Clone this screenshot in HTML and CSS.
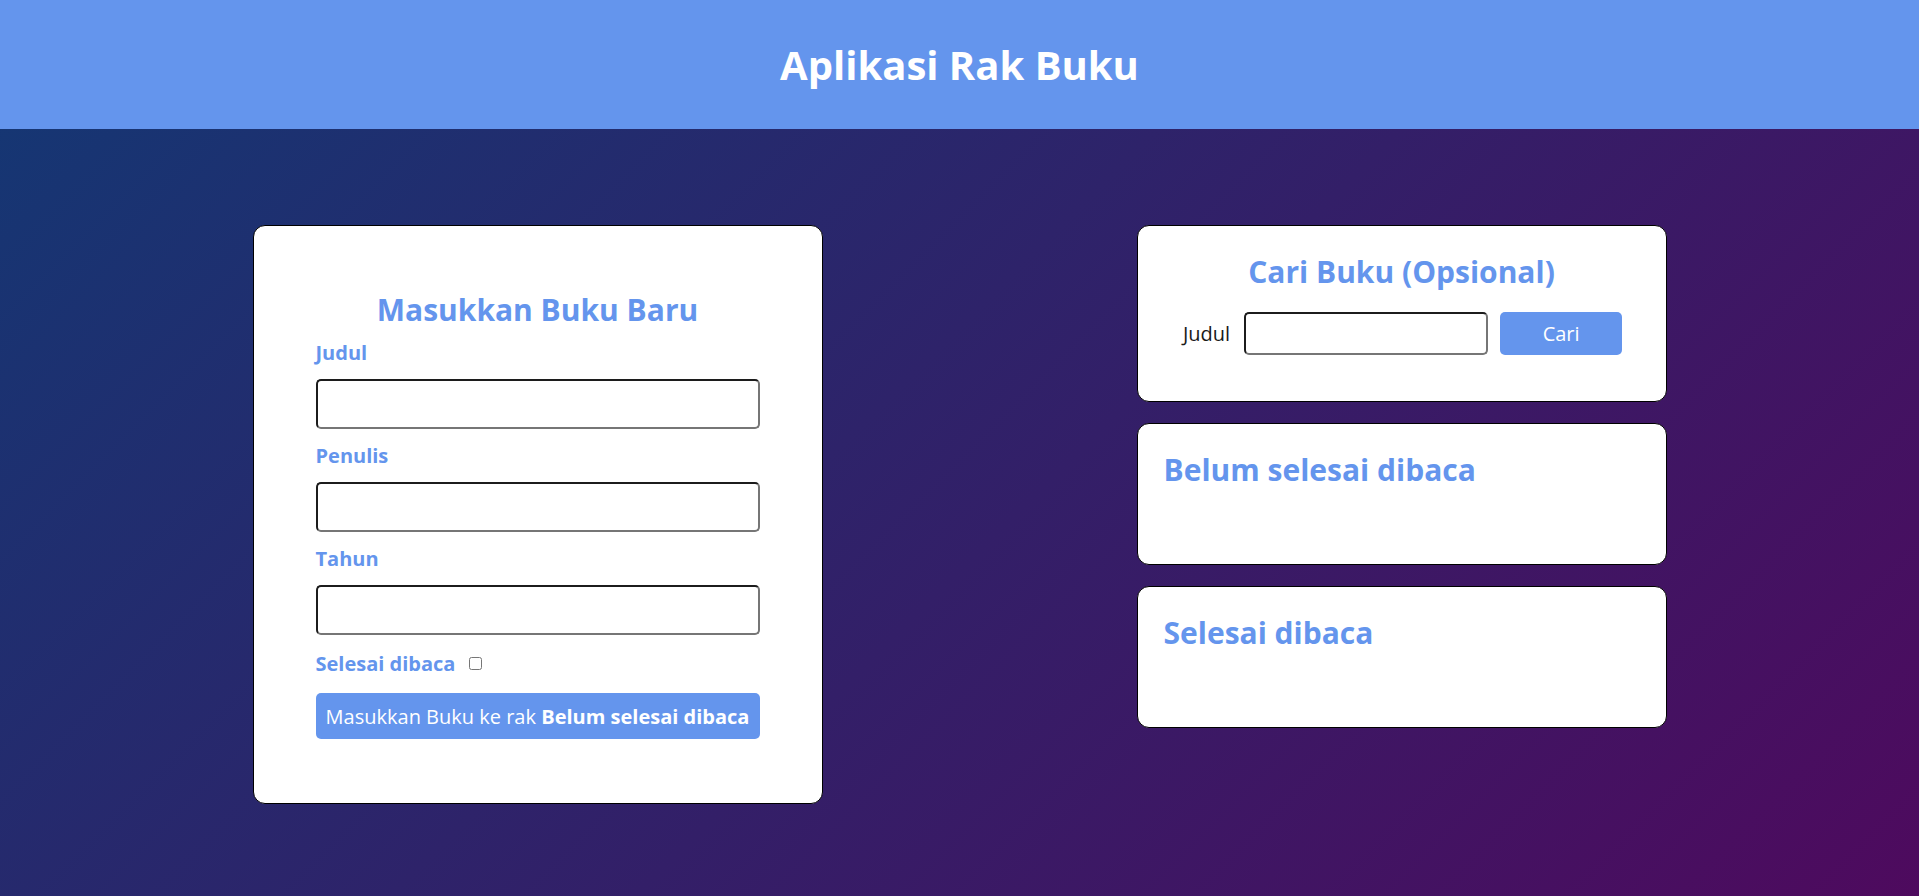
FILE: index.html
```html
<!DOCTYPE html>
<html lang="id">
<head>
<meta charset="utf-8">
<title>Aplikasi Rak Buku</title>
<link rel="stylesheet" href="styles.css">
</head>
<body>
<header class="app-header">
  <h1 class="app-title">Aplikasi Rak Buku</h1>
</header>
<main class="main">
  <section class="card input-card">
    <h2 class="card-title centered">Masukkan Buku Baru</h2>
    <form class="book-form">
      <div class="field">
        <label class="field-label" for="inputJudul">Judul</label>
        <input class="text-input" id="inputJudul" type="text">
      </div>
      <div class="field">
        <label class="field-label" for="inputPenulis">Penulis</label>
        <input class="text-input" id="inputPenulis" type="text">
      </div>
      <div class="field">
        <label class="field-label" for="inputTahun">Tahun</label>
        <input class="text-input" id="inputTahun" type="number">
      </div>
      <div class="field-inline">
        <label class="field-label" for="inputSelesai">Selesai dibaca</label>
        <input class="checkbox" id="inputSelesai" type="checkbox">
      </div>
      <button class="btn-submit" type="button">Masukkan Buku ke rak <strong>Belum selesai dibaca</strong></button>
    </form>
  </section>
  <div class="right-col">
    <section class="card search-card">
      <h2 class="card-title centered">Cari Buku (Opsional)</h2>
      <form class="search-row">
        <label class="search-label" for="searchJudul">Judul</label>
        <input class="text-input search-input" id="searchJudul" type="text">
        <button class="btn-search" type="button">Cari</button>
      </form>
    </section>
    <section class="card shelf-card">
      <h2 class="card-title">Belum selesai dibaca</h2>
      <div class="book-list"></div>
    </section>
    <section class="card shelf-card">
      <h2 class="card-title">Selesai dibaca</h2>
      <div class="book-list"></div>
    </section>
  </div>
</main>
</body>
</html>
```
FILE: styles.css
```css
* { box-sizing: border-box; }

html, body { height: 100%; }

body {
  margin: 0;
  min-height: 100vh;
  font-family: "Open Sans", "Noto Sans", sans-serif;
  background: linear-gradient(135deg, #133874 0%, #4e0a5e 100%);
}

.app-header {
  background: #6495ed;
  padding: 37px 0;
  text-align: center;
}

.app-title {
  margin: 0;
  font-size: 40px;
  line-height: 55px;
  font-weight: 700;
  color: #ffffff;
}

.main {
  width: 1414px;
  margin: 0 auto;
  padding-top: 96px;
  display: flex;
  justify-content: space-between;
  align-items: flex-start;
}

.card {
  background: #ffffff;
  border: 1px solid #000000;
  border-radius: 12px;
}

.card-title {
  margin: 0;
  font-size: 30px;
  line-height: 41px;
  font-weight: 700;
  color: #6495ed;
}

.centered { text-align: center; }

/* input card */
.input-card {
  width: 570px;
  padding: 63px 62px 64px 62px;
}

.input-card .card-title { margin-bottom: 9px; }

.field { display: flex; flex-direction: column; }

.field-label {
  display: block;
  font-size: 20px;
  line-height: 27px;
  font-weight: 700;
  color: #6495ed;
  margin-bottom: 13px;
}

.text-input {
  display: block;
  width: 100%;
  height: 50px;
  margin: 0 0 13px 0;
  padding: 0 8px;
  font-family: inherit;
  font-size: 18px;
  background: #ffffff;
  border: 2px solid;
  border-color: #1c1c1c #767676 #767676 #1c1c1c;
  border-radius: 5px;
}

.field-inline {
  display: flex;
  align-items: center;
  gap: 14px;
  margin-top: 2px;
  margin-bottom: 16px;
  height: 27px;
}

.field-inline .field-label { margin: 0; }

.checkbox {
  margin: 0;
  width: 13px;
  height: 13px;
}

.btn-submit {
  display: block;
  width: 100%;
  height: 46px;
  padding: 0;
  border: none;
  border-radius: 5px;
  background: #6495ed;
  color: #ffffff;
  font-family: inherit;
  font-size: 20px;
  font-weight: 400;
  white-space: nowrap;
}

.btn-submit strong { font-weight: 700; }

/* right column */
.right-col {
  width: 530px;
  display: flex;
  flex-direction: column;
  gap: 21px;
}

.search-card { padding: 25px 26px 46px; }

.search-card .card-title { margin-bottom: 20px; }

.search-row {
  display: flex;
  justify-content: center;
  align-items: center;
  padding-left: 2px;
}

.search-label {
  font-size: 20px;
  line-height: 27px;
  color: #1a1a1a;
  margin-right: 14px;
}

.search-input {
  width: 244px;
  height: 43px;
  margin: 0 12px 0 0;
}

.btn-search {
  width: 122px;
  height: 43px;
  border: none;
  border-radius: 5px;
  background: #6495ed;
  color: #ffffff;
  font-family: inherit;
  font-size: 20px;
}

.shelf-card { padding: 25px 26px 24px; }

.book-list { min-height: 50px; }
```
